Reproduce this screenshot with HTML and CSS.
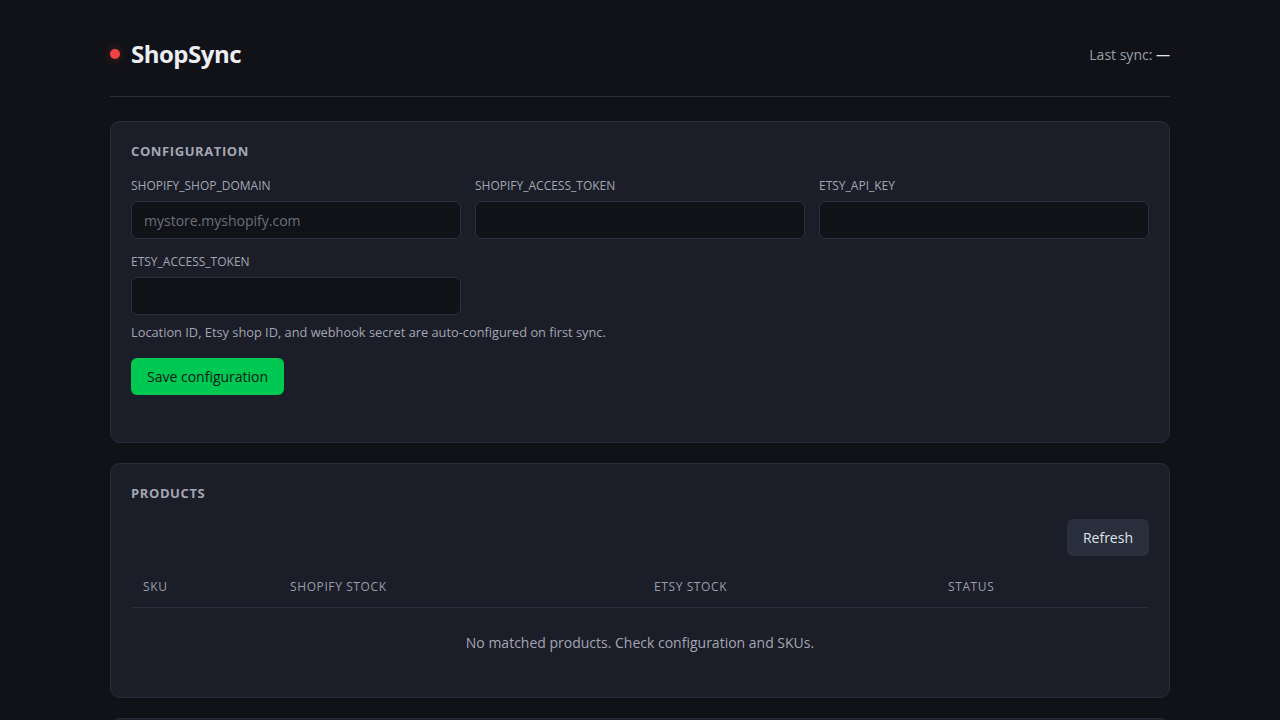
FILE: index.html
```html
<!DOCTYPE html>
<html lang="en">
<head>
<meta charset="utf-8">
<title>ShopSync</title>
<link rel="stylesheet" href="styles.css">
</head>
<body>
<div class="page">
  <header class="header">
    <div class="brand">
      <span class="dot"></span>
      <h1 class="title">ShopSync</h1>
    </div>
    <div class="last-sync">Last sync: <span class="sync-value">—</span></div>
  </header>

  <section class="card">
    <h2 class="card-title">CONFIGURATION</h2>
    <div class="grid">
      <label class="field">
        <span class="label">SHOPIFY_SHOP_DOMAIN</span>
        <input class="input" type="text" placeholder="mystore.myshopify.com">
      </label>
      <label class="field">
        <span class="label">SHOPIFY_ACCESS_TOKEN</span>
        <input class="input" type="password">
      </label>
      <label class="field">
        <span class="label">ETSY_API_KEY</span>
        <input class="input" type="password">
      </label>
      <label class="field">
        <span class="label">ETSY_ACCESS_TOKEN</span>
        <input class="input" type="password">
      </label>
    </div>
    <p class="hint">Location ID, Etsy shop ID, and webhook secret are auto-configured on first sync.</p>
    <button class="btn btn-primary" type="button">Save configuration</button>
  </section>

  <section class="card card-products">
    <h2 class="card-title">PRODUCTS</h2>
    <div class="toolbar">
      <button class="btn btn-secondary" type="button">Refresh</button>
    </div>
    <table class="table">
      <thead>
        <tr>
          <th class="col-sku">SKU</th>
          <th class="col-shopify">SHOPIFY STOCK</th>
          <th class="col-etsy">ETSY STOCK</th>
          <th class="col-status">STATUS</th>
        </tr>
      </thead>
      <tbody>
        <tr>
          <td class="empty" colspan="4">No matched products. Check configuration and SKUs.</td>
        </tr>
      </tbody>
    </table>
  </section>

  <section class="card card-next"></section>
</div>
</body>
</html>
```

FILE: styles.css
```css
* { box-sizing: border-box; }

html, body {
  margin: 0;
  padding: 0;
  background: #111217;
  color: #e4e6ec;
  font-family: "Open Sans", "Noto Sans", sans-serif;
}

.page {
  width: 1060px;
  margin: 0 auto;
  padding-top: 30px;
}

.header {
  display: flex;
  align-items: center;
  justify-content: space-between;
  height: 67px;
  padding-bottom: 19px;
  border-bottom: 1px solid #2a2d3a;
  margin-bottom: 24px;
}

.brand {
  display: flex;
  align-items: center;
  gap: 11px;
}

.dot {
  width: 10px;
  height: 10px;
  border-radius: 50%;
  background: #ef4444;
  box-shadow: 0 0 8px rgba(239, 68, 68, 0.35);
}

.title {
  margin: 0;
  font-size: 24px;
  font-weight: 700;
  letter-spacing: -0.5px;
  color: #eceef3;
}

.last-sync {
  font-size: 14px;
  color: #9a9eab;
  padding-top: 2px;
}

.sync-value {
  color: #e4e6ec;
}

.card {
  background: #1b1d28;
  border: 1px solid #2a2d3a;
  border-radius: 10px;
  padding: 19px 20px 47px;
  margin-bottom: 20px;
}

.card-title {
  margin: 0 0 16px;
  font-size: 13px;
  font-weight: 700;
  letter-spacing: 0.6px;
  color: #a3a7b3;
  line-height: 20px;
}

.grid {
  display: grid;
  grid-template-columns: repeat(3, 1fr);
  column-gap: 14px;
  row-gap: 14px;
}

.field {
  display: flex;
  flex-direction: column;
  gap: 6px;
}

.label {
  font-size: 12px;
  color: #a3a7b3;
  line-height: 18px;
}

.input {
  height: 38px;
  background: #111217;
  border: 1px solid #2d303d;
  border-radius: 6px;
  padding: 0 12px;
  font-family: inherit;
  font-size: 14px;
  color: #e4e6ec;
  outline: none;
}

.input::placeholder {
  color: #6b6f7c;
}

.hint {
  margin: 7px 0 16px;
  font-size: 12.8px;
  line-height: 20px;
  color: #a3a7b3;
}

.btn {
  font-family: inherit;
  font-size: 14px;
  border: none;
  border-radius: 6px;
  height: 37px;
  padding: 0 16px;
  cursor: pointer;
}

.btn-primary {
  background: #00c853;
  color: #0d1a12;
}

.btn-secondary {
  background: #2a2f3d;
  color: #dfe2e8;
}

.card-products {
  padding-bottom: 31px;
}

.toolbar {
  display: flex;
  justify-content: flex-end;
  margin-top: 3px;
  margin-bottom: 14px;
}

.table {
  width: 100%;
  border-collapse: collapse;
}

.table th {
  text-align: left;
  font-size: 12px;
  font-weight: 400;
  letter-spacing: 0.6px;
  color: #9a9eab;
  padding: 8px 12px 11px;
  border-bottom: 1px solid #2a2d3a;
  line-height: 18px;
}

.col-sku { width: 147px; }
.col-shopify { width: 364px; }
.col-etsy { width: 294px; }
.col-status { width: 213px; }

.empty {
  text-align: center;
  font-size: 14px;
  color: #a3a7b3;
  padding: 24px 12px 12px;
  line-height: 22px;
}

.card-next {
  height: 60px;
  padding: 0;
}
```
